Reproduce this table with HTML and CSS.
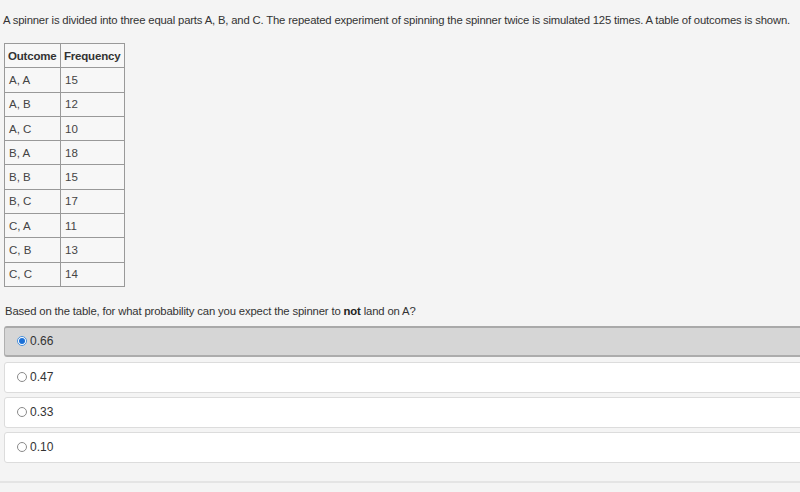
FILE: index.html
```html
<!DOCTYPE html>
<html>
<head>
<meta charset="utf-8">
<link rel="stylesheet" href="styles.css">
</head>
<body>
<div class="page">
  <p class="intro">A spinner is divided into three equal parts A, B, and C. The repeated experiment of spinning the spinner twice is simulated 125 times. A table of outcomes is shown.</p>
  <table class="outcomes">
    <colgroup><col class="c1"><col class="c2"></colgroup>
    <tr><th>Outcome</th><th>Frequency</th></tr>
    <tr><td>A, A</td><td>15</td></tr>
    <tr><td>A, B</td><td>12</td></tr>
    <tr><td>A, C</td><td>10</td></tr>
    <tr><td>B, A</td><td>18</td></tr>
    <tr><td>B, B</td><td>15</td></tr>
    <tr><td>B, C</td><td>17</td></tr>
    <tr><td>C, A</td><td>11</td></tr>
    <tr><td>C, B</td><td>13</td></tr>
    <tr><td>C, C</td><td>14</td></tr>
  </table>
  <p class="question">Based on the table, for what probability can you expect the spinner to <b>not</b> land on A?</p>
  <div class="options">
    <label class="option selected"><span class="radio on"></span>0.66</label>
    <label class="option"><span class="radio"></span>0.47</label>
    <label class="option"><span class="radio"></span>0.33</label>
    <label class="option"><span class="radio"></span>0.10</label>
  </div>
  <div class="footer"></div>
</div>
</body>
</html>
```

FILE: styles.css
```css
html, body {
  margin: 0;
  padding: 0;
  background: #f4f4f4;
}
.page {
  font-family: "Liberation Sans", Arial, sans-serif;
  font-size: 11.5px;
  color: #333;
  padding: 0 0 0 4px;
  overflow: hidden;
  height: 492px;
  box-sizing: border-box;
}
.intro {
  margin: 0;
  padding: 13px 0 0 0;
  margin-left: -1px;
  line-height: 14px;
  white-space: nowrap;
  font-size: 11.3px;
  letter-spacing: -0.17px;
}
.outcomes {
  margin-top: 16px;
  border-collapse: collapse;
  table-layout: fixed;
  width: 121px;
  background: #f7f7f7;
}
.outcomes .c1 { width: 56px; }
.outcomes .c2 { width: 64px; }
.outcomes th, .outcomes td {
  border: 1px solid #999;
  height: 23.3px;
  padding: 0 0 0 4px;
  text-align: left;
  color: #444;
  white-space: nowrap;
  overflow: hidden;
  font-size: 11.5px;
}
.outcomes th {
  font-weight: bold;
  color: #333;
  padding-left: 3px;
  letter-spacing: -0.2px;
}
.question {
  margin: 17px 0 0 1px;
  line-height: 14px;
  font-size: 11.3px;
  letter-spacing: -0.15px;
}
.question b { color: #222; }
.options {
  margin-top: 8px;
  display: flex;
  flex-direction: column;
  gap: 4px;
  margin-right: -10px;
}
.option {
  display: flex;
  align-items: center;
  height: 29px;
  background: #fff;
  border: 1px solid #dcdcdc;
  border-radius: 3px;
  padding-left: 12px;
  font-size: 12px;
  color: #333;
}
.option.selected {
  background: #d6d6d6;
  border: 1px solid #b0b0b0;
  border-top: 2px solid #a9a9a9;
  border-bottom: 2px solid #acacac;
  height: 27px;
  margin-bottom: 1px;
}
.radio {
  width: 8px;
  height: 8px;
  border: 1px solid #8a8a8a;
  border-radius: 50%;
  background: #fff;
  margin-right: 3px;
  position: relative;
  flex: none;
}
.radio.on {
  border-color: #4a90d9;
}
.radio.on::after {
  content: "";
  position: absolute;
  left: 1px;
  top: 1px;
  width: 6px;
  height: 6px;
  border-radius: 50%;
  background: #1a6fd6;
}
.footer {
  margin-top: 18px;
  border-top: 2px solid #e4e4e4;
  margin-left: -4px;
}
```
